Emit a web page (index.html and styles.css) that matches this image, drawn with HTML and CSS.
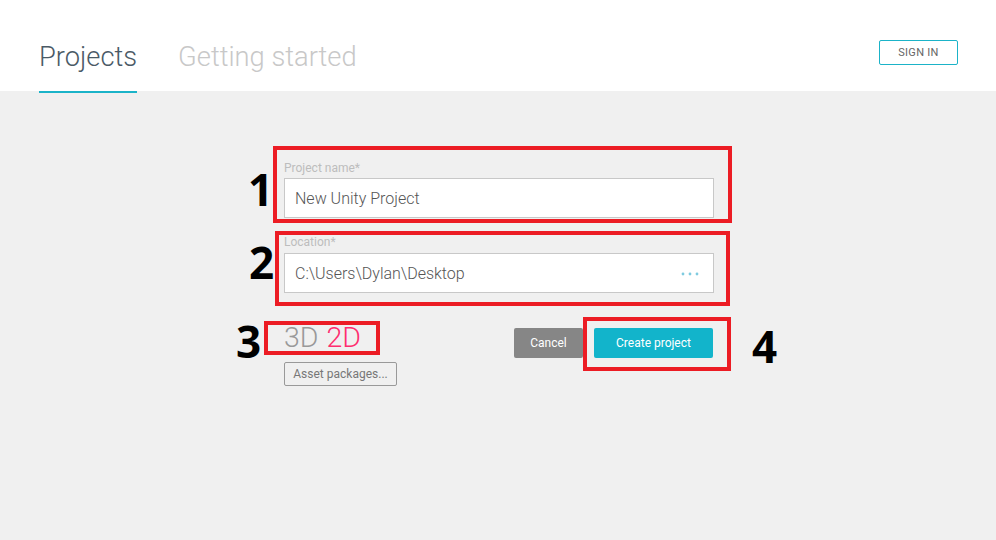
FILE: index.html
```html
<!DOCTYPE html>
<html>
<head>
<meta charset="utf-8">
<link rel="stylesheet" href="styles.css">
</head>
<body>
<header class="topbar">
  <nav class="tabs">
    <a class="tab tab-active">Projects</a>
    <a class="tab">Getting started</a>
  </nav>
  <button class="signin">SIGN IN</button>
</header>
<main class="form">
  <div class="field field-name">
    <div class="label">Project name*</div>
    <div class="input">New Unity Project</div>
    <div class="mark mark-1"><span class="num num-1">1</span></div>
  </div>
  <div class="field field-loc">
    <div class="label">Location*</div>
    <div class="input input-loc">
      <span>C:\Users\Dylan\Desktop</span>
      <svg class="dots" width="18" height="4" viewBox="0 0 18 4"><circle cx="2" cy="2" r="1.4" fill="#7fcbe0"/><circle cx="9" cy="2" r="1.4" fill="#7fcbe0"/><circle cx="16" cy="2" r="1.4" fill="#7fcbe0"/></svg>
    </div>
    <div class="mark mark-2"><span class="num num-2">2</span></div>
  </div>
  <div class="actions">
    <div class="left">
      <div class="mode">
        <span class="mode-3d">3D</span>
        <span class="mode-2d">2D</span>
        <div class="mark mark-3"><span class="num num-3">3</span></div>
      </div>
      <button class="assets">Asset packages...</button>
    </div>
    <div class="right">
      <button class="cancel">Cancel</button>
      <div class="create-wrap">
        <button class="create">Create project</button>
        <div class="mark mark-4"><span class="num num-4">4</span></div>
      </div>
    </div>
  </div>
</main>
</body>
</html>
```
FILE: styles.css
```css
* { box-sizing: border-box; }
html, body { margin: 0; padding: 0; }
body {
  background: #f0f0f0;
  font-family: Roboto, "Liberation Sans", sans-serif;
  width: 996px;
  height: 540px;
  overflow: hidden;
}
.topbar {
  height: 91px;
  background: #fff;
  display: flex;
  justify-content: space-between;
  align-items: flex-start;
  padding: 0 38px 0 39px;
}
.tabs {
  display: flex;
  gap: 41px;
  padding-top: 39px;
}
.tab {
  font-size: 27.3px;
  font-weight: 300;
  color: #c8c8c8;
  line-height: 36px;
  height: 54px;
}
.tab-active {
  color: #4a5a66;
  border-bottom: 2px solid #1bb3c8;
}
.signin {
  margin-top: 40px;
  width: 79px;
  height: 25px;
  border: 1px solid #1bb3c8;
  border-radius: 2px;
  background: #fff;
  color: #666;
  font-family: Roboto, sans-serif;
  font-size: 11px;
  letter-spacing: 0.3px;
  padding: 0;
}
.form {
  width: 430px;
  margin: 0 auto;
  padding-top: 70px;
  position: relative;
  left: 1px;
}
.field { position: relative; }
.field-loc { margin-top: 17px; }
.label {
  font-size: 12px;
  line-height: 14px;
  color: #bdbdbd;
  margin-bottom: 3px;
}
.field-loc .label { margin-bottom: 4px; }
.input {
  height: 40px;
  background: #fff;
  border: 1px solid #c8c8c8;
  padding: 0 10px;
  display: flex;
  align-items: center;
  justify-content: space-between;
  font-size: 16px;
  font-weight: 300;
  color: #555;
}
.dots { margin-right: 4px; margin-top: 2px; }
.mark {
  position: absolute;
  border: 4px solid #ec1c24;
  pointer-events: none;
}
.num {
  position: absolute;
  font-family: "Open Sans", "DejaVu Sans", sans-serif;
  font-weight: 700;
  font-size: 44px;
  line-height: 44px;
  color: #000;
}
.mark-1 { left: -11px; top: -15px; width: 459px; height: 77px; }
.num-1 { left: -29px; top: 17px; }
.mark-2 { left: -9px; top: -4px; width: 455px; height: 75px; }
.num-2 { left: -30px; top: 5px; }
.actions {
  display: flex;
  justify-content: space-between;
  align-items: flex-start;
  margin-top: 29px;
}
.left { display: flex; flex-direction: column; align-items: flex-start; }
.mode {
  position: relative;
  font-size: 28.5px;
  font-weight: 300;
  line-height: 32px;
  display: flex;
  gap: 8px;
}
.mode-3d { color: #999; }
.mode-2d { color: #ff2d6f; }
.mark-3 { left: -20px; top: -1px; width: 116px; height: 34px; }
.num-3 { left: -32px; top: -6px; }
.assets {
  margin-top: 8px;
  width: 113px;
  height: 24px;
  border: 1px solid #999;
  border-radius: 2px;
  background: transparent;
  color: #777;
  font-family: Roboto, sans-serif;
  font-size: 12px;
  padding: 0;
}
.right {
  display: flex;
  gap: 11px;
  padding-top: 6px;
  margin-right: 1px;
}
.cancel, .create {
  height: 30px;
  border: none;
  border-radius: 2px;
  color: #fff;
  font-family: Roboto, sans-serif;
  font-size: 12px;
  padding: 0;
}
.cancel { width: 69px; background: #868686; }
.create { width: 119px; background: #12b4cb; }
.create-wrap { position: relative; }
.mark-4 { left: -11px; top: -11px; width: 148px; height: 54px; }
.num-4 { left: 165px; top: 3px; }
```
